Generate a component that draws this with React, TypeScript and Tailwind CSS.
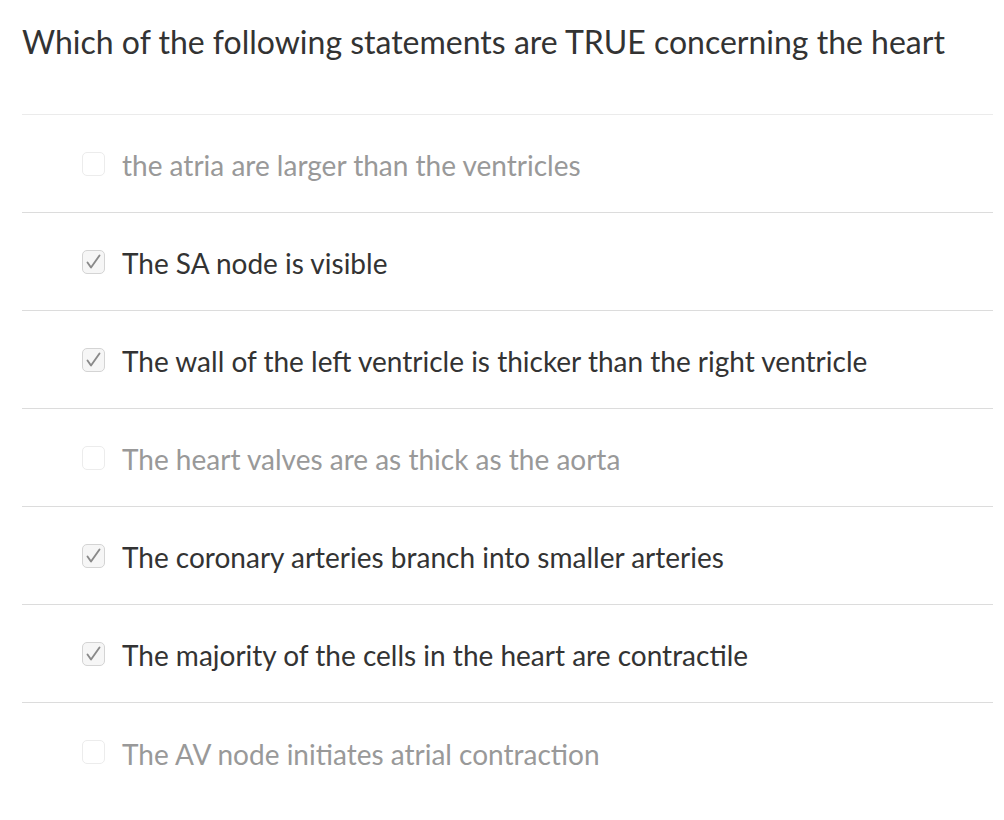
const options = [
  { text: "the atria are larger than the ventricles", checked: false },
  { text: "The SA node is visible", checked: true },
  { text: "The wall of the left ventricle is thicker than the right ventricle", checked: true },
  { text: "The heart valves are as thick as the aorta", checked: false },
  { text: "The coronary arteries branch into smaller arteries", checked: true },
  { text: "The majority of the cells in the heart are contractile", checked: true },
  { text: "The AV node initiates atrial contraction", checked: false },
];

function Box({ checked }: { checked: boolean }) {
  return (
    <span
      className={
        "flex h-[24px] w-[23px] shrink-0 items-center justify-center rounded-[5px] border " +
        (checked ? "border-[#d4d4d4] bg-[#f6f6f6]" : "border-[#ececec] bg-white")
      }
    >
      {checked && (
        <svg width="21" height="22" viewBox="0 0 21 22" fill="none">
          <path d="M4.5 11.5 L8 16.5 L16.5 4.5" stroke="#8a8a8a" strokeWidth="1.9" strokeLinecap="round" strokeLinejoin="round" />
        </svg>
      )}
    </span>
  );
}

export default function App() {
  return (
    <div className="min-h-screen bg-white pl-[22px] pr-[11px]" style={{ fontFamily: "Lato, 'Open Sans', sans-serif" }}>
      <h1 className="pt-[22px] text-[32px] leading-[40px] text-[#333333]">
        Which of the following statements are TRUE concerning the heart
      </h1>
      <div className="mt-[52px] border-t border-[#ebebeb]">
        {options.map((o, i) => (
          <div
            key={i}
            className={
              "flex h-[98px] items-center gap-[17px] pl-[60px] " +
              (i < options.length - 1 ? "border-b border-[#dcdcdc]" : "")
            }
          >
            <Box checked={o.checked} />
            <span className={"pt-[3px] text-[28px] leading-[34px] " + (o.checked ? "text-[#333333]" : "text-[#999999]")}>{o.text}</span>
          </div>
        ))}
      </div>
    </div>
  );
}
